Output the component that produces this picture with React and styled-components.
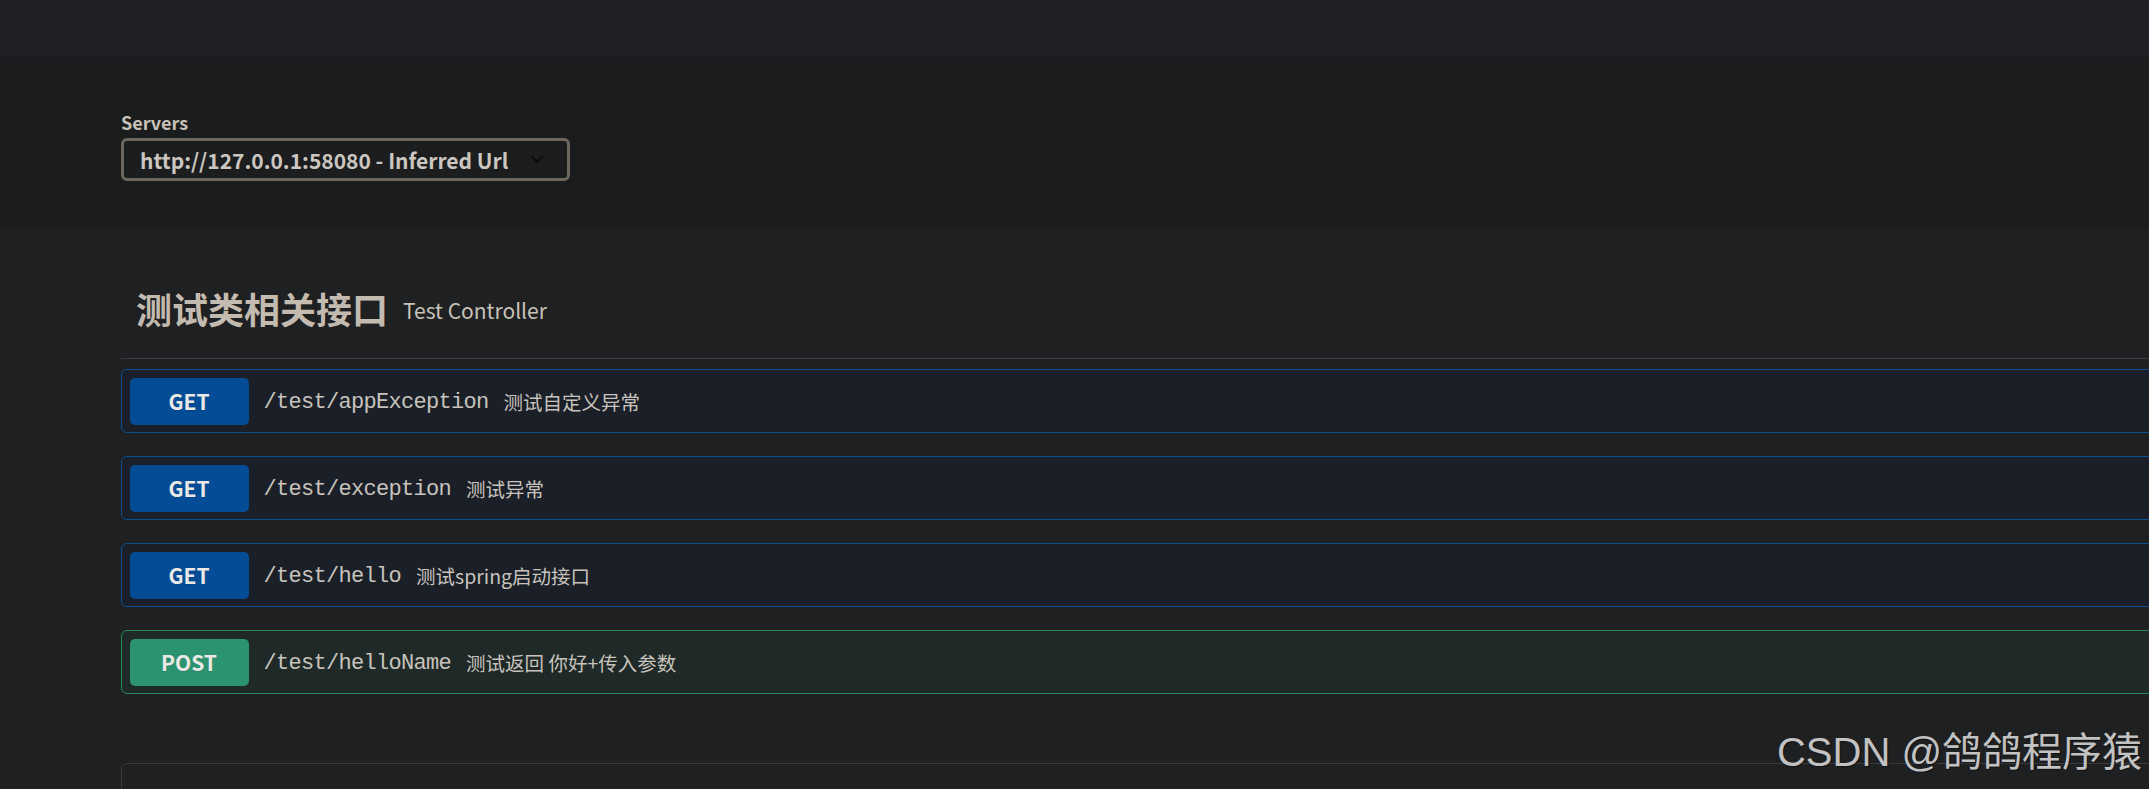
import React from "react";
import styled, { createGlobalStyle } from "styled-components";

const GlobalStyle = createGlobalStyle`
  html, body {
    margin: 0;
    padding: 0;
    background: #1f2022;
    overflow: hidden;
  }
  body {
    font-family: "Noto Sans CJK SC", "Noto Sans", sans-serif;
    color: #c8c3bc;
  }
`;

const Page = styled.div`
  position: relative;
  width: 100vw;
  height: 789px;
  overflow: hidden;
  background: #1f2022;
`;

const TopBand = styled.div`
  height: 57px;
  background: #1f2023;
`;

const SchemeContainer = styled.section`
  background: #1b1c1e;
  padding: 53px 0 46px;
  box-shadow: 0 1px 2px rgba(0, 0, 0, 0.15);
`;

const Wrapper = styled.div`
  box-sizing: border-box;
  width: 2190px;
  margin-left: 91px;
  padding: 0 30px;
`;

const ServersTitle = styled.div`
  font-size: 18px;
  font-weight: 700;
  line-height: 24px;
  color: #c8c2b8;
  margin-bottom: 4px;
`;

const ServerSelect = styled.div`
  box-sizing: border-box;
  width: 449px;
  height: 43px;
  border: 3px solid #6e675d;
  border-radius: 6px;
  display: flex;
  align-items: center;
  justify-content: space-between;
  padding: 0 23px 0 16px;
  font-size: 21px;
  font-weight: 700;
  color: #cbc6bf;
  background: #1c1d1f;
`;

const Chevron = styled.svg`
  width: 14px;
  height: 9px;
  flex: none;
`;

const TagHeading = styled.h3`
  box-sizing: border-box;
  margin: 37px 0 0;
  height: 95px;
  padding: 0 30px 6px 15px;
  display: flex;
  align-items: center;
  border-bottom: 1px solid #3a3c3f;
`;

const TagName = styled.span`
  font-size: 36px;
  font-weight: 700;
  color: #c3bbaf;
`;

const TagDesc = styled.small`
  font-size: 21px;
  font-weight: 400;
  color: #c8c2b8;
  padding: 4px 15px 0;
`;

const OpList = styled.div`
  margin-top: 10px;
`;

const palette = {
  get: { border: "#0b4f95", bg: "#1a1f28", badge: "#044c96" },
  post: { border: "#218a57", bg: "#1f2a28", badge: "#2c9370" },
};

const OpBlock = styled.div`
  box-sizing: border-box;
  height: 64px;
  margin-bottom: 23px;
  display: flex;
  align-items: center;
  padding: 0 7.5px;
  border: 1px solid ${(p) => palette[p.$kind].border};
  border-radius: 6px;
  background: ${(p) => palette[p.$kind].bg};
`;

const MethodBadge = styled.span`
  box-sizing: border-box;
  width: 119px;
  height: 47px;
  flex: none;
  display: flex;
  align-items: center;
  justify-content: center;
  border-radius: 5px;
  background: ${(p) => palette[p.$kind].badge};
  color: #ebe9e6;
  font-size: 21px;
  font-weight: 700;
  text-shadow: 0 1px 0 rgba(0, 0, 0, 0.1);
`;

const OpPath = styled.span`
  font-family: "Liberation Mono", "DejaVu Sans Mono", monospace;
  font-size: 22px;
  letter-spacing: -0.7px;
  color: #c8c3bc;
  padding: 2px 15px 0;
`;

const OpSummary = styled.span`
  font-size: 19.5px;
  color: #c8c3bc;
`;

const ModelsBox = styled.section`
  box-sizing: border-box;
  margin-top: 69px;
  height: 240px;
  border: 1px solid #393a3c;
  border-radius: 6px;
  background: #1f2022;
`;

const Watermark = styled.div`
  position: absolute;
  right: 7px;
  top: 731px;
  font-family: "Liberation Sans", "Noto Sans CJK SC", sans-serif;
  font-size: 40px;
  line-height: 42px;
  color: #c2c2c2;
  text-shadow: 1px 1px 1px rgba(0, 0, 0, 0.45);
  white-space: nowrap;
`;

const ops = [
  { method: "GET", kind: "get", path: "/test/appException", summary: "测试自定义异常" },
  { method: "GET", kind: "get", path: "/test/exception", summary: "测试异常" },
  { method: "GET", kind: "get", path: "/test/hello", summary: "测试spring启动接口" },
  { method: "POST", kind: "post", path: "/test/helloName", summary: "测试返回 你好+传入参数" },
];

export default function App() {
  return (
    <Page>
      <GlobalStyle />
      <TopBand />
      <SchemeContainer>
        <Wrapper>
          <ServersTitle>Servers</ServersTitle>
          <ServerSelect>
            <span>http://127.0.0.1:58080 - Inferred Url</span>
            <Chevron viewBox="0 0 14 9">
              <polyline points="1.5,1.5 7,7 12.5,1.5" fill="none" stroke="#0e0e0e" strokeWidth="2.2" />
            </Chevron>
          </ServerSelect>
        </Wrapper>
      </SchemeContainer>
      <Wrapper>
        <TagHeading>
          <TagName>测试类相关接口</TagName>
          <TagDesc>Test Controller</TagDesc>
        </TagHeading>
        <OpList>
          {ops.map((op) => (
            <OpBlock key={op.path} $kind={op.kind}>
              <MethodBadge $kind={op.kind}>{op.method}</MethodBadge>
              <OpPath>{op.path}</OpPath>
              <OpSummary>{op.summary}</OpSummary>
            </OpBlock>
          ))}
        </OpList>
        <ModelsBox />
      </Wrapper>
      <Watermark>CSDN @鸽鸽程序猿</Watermark>
    </Page>
  );
}
